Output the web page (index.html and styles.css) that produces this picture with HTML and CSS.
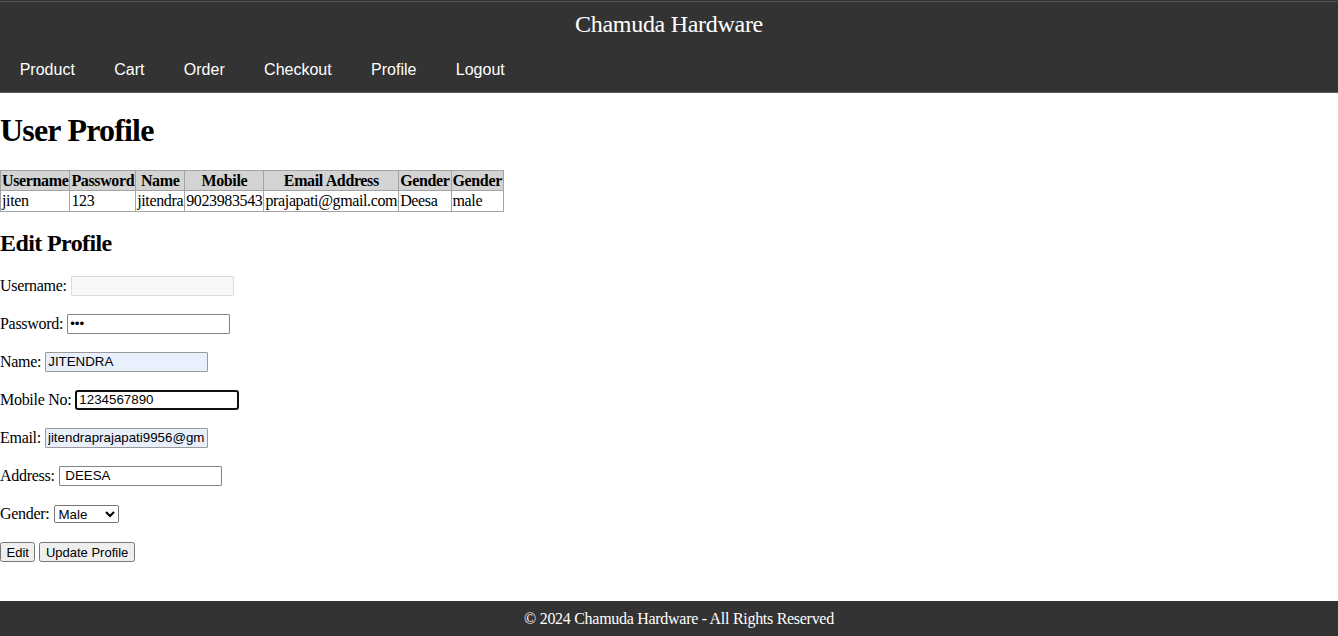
FILE: index.html
```html
<!DOCTYPE html>
<html lang="en">
<head>
<meta charset="utf-8">
<title>Chamuda Hardware - User Profile</title>
<link rel="stylesheet" href="styles.css">
</head>
<body>
<header class="site-header">
  <div class="site-title">Chamuda Hardware</div>
  <nav class="site-nav">
    <a href="#">Product</a>
    <a href="#">Cart</a>
    <a href="#">Order</a>
    <a href="#">Checkout</a>
    <a href="#">Profile</a>
    <a href="#">Logout</a>
  </nav>
</header>
<main class="content">
  <h1 class="page-title">User Profile</h1>
  <table class="profile-table">
    <thead>
      <tr>
        <th>Username</th><th>Password</th><th>Name</th><th>Mobile</th><th>Email Address</th><th>Gender</th><th>Gender</th>
      </tr>
    </thead>
    <tbody>
      <tr>
        <td>jiten</td><td>123</td><td>jitendra</td><td>9023983543</td><td>prajapati@gmail.com</td><td>Deesa</td><td>male</td>
      </tr>
    </tbody>
  </table>
  <h2 class="section-title">Edit Profile</h2>
  <form class="edit-form">
    <p class="field"><label>Username:</label><input type="text" disabled></p>
    <p class="field"><label>Password:</label><input type="password" value="123"></p>
    <p class="field"><label>Name:</label><input type="text" class="autofilled" value="JITENDRA"></p>
    <p class="field"><label>Mobile No:</label><input type="text" class="focused" value="1234567890"></p>
    <p class="field"><label>Email:</label><input type="text" class="autofilled" value="jitendraprajapati9956@gmail.com"></p>
    <p class="field"><label>Address:</label><input type="text" value=" DEESA"></p>
    <p class="field"><label>Gender:</label><select><option>Male</option><option>Female</option></select></p>
    <p class="field"><button type="button">Edit</button><button type="button">Update Profile</button></p>
  </form>
</main>
<footer class="site-footer">&copy; 2024 Chamuda Hardware - All Rights Reserved</footer>
</body>
</html>
```
FILE: styles.css
```css
html, body {
  margin: 0;
  padding: 0;
}
body {
  font-family: "Liberation Serif", "Times New Roman", serif;
  font-size: 16px;
  letter-spacing: -0.018em;
  color: #000;
  background: #fff;
  min-height: 100vh;
  display: flex;
  flex-direction: column;
}
.site-header {
  background: linear-gradient(to bottom, #333 0, #333 1px, #555 1px, #555 2px, #333 2px, #333 calc(100% - 1px), #5a5a5a calc(100% - 1px));
  color: #fff;
}
.site-title {
  text-align: center;
  font-size: 24px;
  padding: 11px 0 9px;
  line-height: 27px;
}
.site-nav {
  display: flex;
}
.site-nav a {
  font-family: "Liberation Sans", Arial, sans-serif;
  font-size: 16px;
  letter-spacing: 0;
  color: #fff;
  text-decoration: none;
  padding: 14px 19.7px;
  line-height: 18px;
}
.content {
  flex: 1;
}
.page-title {
  font-size: 32px;
  letter-spacing: -0.025em;
  margin: 19px 0 21px;
}
.profile-table {
  border-collapse: collapse;
  letter-spacing: -0.023em;
}
.profile-table th,
.profile-table td {
  border: 1px solid #a3a3a3;
  padding: 0 1px;
  line-height: 19.4px;
}
.profile-table th {
  background: #d3d3d3;
}
.profile-table td {
  text-align: left;
}
.section-title {
  font-size: 24px;
  letter-spacing: -0.025em;
  margin: 18px 0 18px;
}
.field {
  display: flex;
  align-items: center;
  gap: 4px;
  height: 22px;
  margin: 16px 0;
}
.field input {
  box-sizing: border-box;
  width: 163px;
  height: 20px;
  border: 1px solid #858585;
  border-radius: 1px;
  padding: 1px 2px;
  font-family: "Liberation Sans", Arial, sans-serif;
  font-size: 13.33px;
  background: #fff;
  color: #000;
}
.field input:disabled {
  border-color: #dadada;
  background: #f7f7f7;
}
.field input.autofilled {
  background: #e8f0fe;
  border-color: #9a9a9a;
}
.field input.focused {
  border: 2px solid #101010;
  border-radius: 3px;
  padding: 1px 2px;
  width: 164px;
}
.field select {
  width: 65px;
  height: 18px;
  font-family: "Liberation Sans", Arial, sans-serif;
  font-size: 13.33px;
}
.field button {
  font-family: "Liberation Sans", Arial, sans-serif;
  font-size: 13px;
  padding: 1px 4.5px;
  height: 20px;
}
.site-footer {
  background: #333;
  color: #fff;
  text-align: center;
  padding: 9px 0 8px 20px;
  line-height: 18px;
}
```
